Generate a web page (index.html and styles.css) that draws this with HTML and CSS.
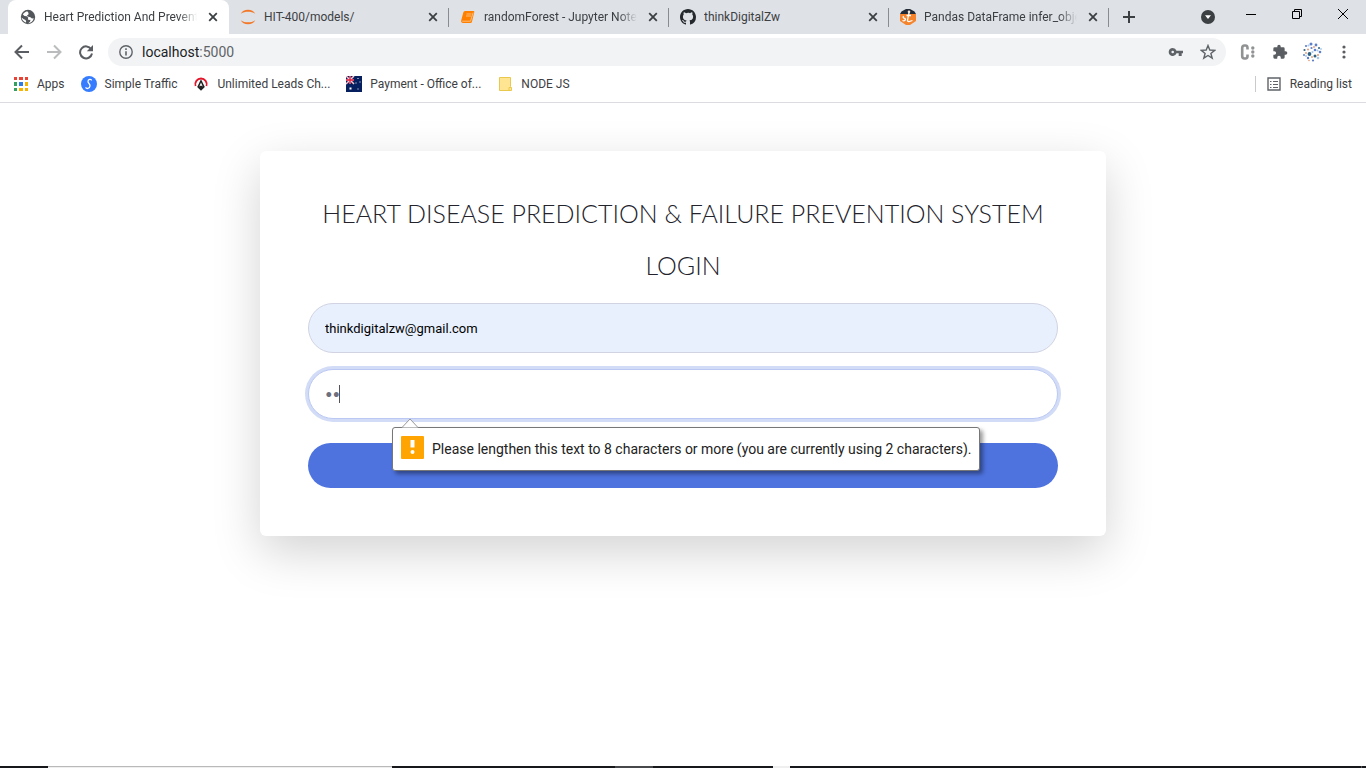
FILE: index.html
```html
<!DOCTYPE html>
<html lang="en">
<head>
<meta charset="utf-8">
<title>Heart Prediction And Prevention</title>
<link rel="stylesheet" href="styles.css">
</head>
<body>
<svg class="defs" aria-hidden="true">
  <symbol id="close" viewBox="0 0 16 16"><path d="M4.2 4.2l7.6 7.6M11.8 4.2l-7.6 7.6" fill="none" stroke="#3c4043" stroke-width="1.8"/></symbol>
</svg>
<header class="browser">
  <div class="tabstrip">
    <nav class="tabs" aria-label="Tabs">
      <div class="tab tab-active">
        <svg class="icon" viewBox="0 0 16 16"><circle cx="8" cy="8" r="7.2" fill="#53575b"/><path d="M7.2 2.2c-1.8.4-3.4 1.6-4.3 3.2l1.6 1.5 2.2.4 1.6 1.4-.5 1.5 1.2.7 1.5-.1-.5 1.9-2 1.7c3-.2 5.200-2.300 5.700-5.100l-1.700.1-1.600-1.200-2.900-.6-.5-1.200 1.600-1.100-.2-1.500z" fill="#fff"/><path d="M1.500 8.600l2.300 1.700 1.800.6.600 2.200-.8.300C3.500 12.600 2.100 11 1.500 8.600z" fill="#fff"/></svg>
        <a class="tab-title fade" href="#">Heart Prediction And Preventi</a>
        <button class="close" aria-label="Close tab"><svg class="icon"><use href="#close"/></svg></button>
      </div>
      <div class="tab">
        <svg class="icon" viewBox="0 0 16 16"><path d="M.8 4.800C2 2.200 4.800.8 8 .8s6 1.400 7.200 4C13 3.200 10.700 2.700 8 2.700s-5 .5-7.200 2.100zM.8 11.200c1.200 2.600 4 4 7.200 4s6-1.400 7.200-4c-2.200 1.600-4.500 2.100-7.200 2.100s-5-.5-7.200-2.100z" fill="#f37726"/></svg>
        <a class="tab-title" href="#">HIT-400/models/</a>
        <button class="close" aria-label="Close tab"><svg class="icon"><use href="#close"/></svg></button>
      </div>
      <div class="tab">
        <svg class="icon" viewBox="0 0 16 16"><path d="M5 2h8.500q1 0 .8 1L12 12.500q-.3 1.500-1.500 1.500H3q-2.200-.1-1.800-2.500L3.300 3.500Q3.700 2 5 2z" fill="#ff8000"/><path d="M6.500 5h5M6 7h5M2.300 12.200h8.200l2.600-8.500" fill="none" stroke="#ffd9ae" stroke-width=".7"/></svg>
        <a class="tab-title fade" href="#">randomForest - Jupyter Noteb</a>
        <button class="close" aria-label="Close tab"><svg class="icon"><use href="#close"/></svg></button>
      </div>
      <div class="tab">
        <svg class="icon" viewBox="0 0 16 16"><path fill="#24292e" d="M8 0C3.580 0 0 3.580 0 8c0 3.540 2.290 6.530 5.470 7.590.4.070.55-.17.55-.38 0-.19-.01-.82-.01-1.490-2.010.37-2.530-.49-2.690-.94-.09-.23-.48-.94-.82-1.130-.28-.15-.68-.52-.01-.53.63-.01 1.080.58 1.230.82.72 1.210 1.870.87 2.330.66.070-.52.28-.87.51-1.070-1.780-.2-3.640-.89-3.640-3.950 0-.87.31-1.590.82-2.150-.08-.2-.36-1.020.08-2.120 0 0 .67-.21 2.200.82A7.600 7.600 0 018 3.860c.68 0 1.360.09 2 .27 1.530-1.040 2.200-.82 2.200-.82.44 1.100.16 1.920.08 2.120.51.56.82 1.270.82 2.150 0 3.070-1.870 3.750-3.650 3.950.29.25.54.73.54 1.480 0 1.070-.01 1.930-.01 2.200 0 .21.15.46.55.38A8.010 8.010 0 0016 8c0-4.420-3.580-8-8-8z"/></svg>
        <a class="tab-title" href="#">thinkDigitalZw</a>
        <button class="close" aria-label="Close tab"><svg class="icon"><use href="#close"/></svg></button>
      </div>
      <div class="tab">
        <svg class="icon" viewBox="0 0 16 16"><path d="M0 5l1.500-2.500L6 0h4l4.500 2.500L16 5z" fill="#222b36"/><path d="M0 5h16v7l-6 4H6l-6-4z" fill="#f5842c"/><path d="M9.200 3L7.500 11.200q0 1.500 1.500 1.300l3.500-1M3.500 7q-1 2 1 2.300 1.500.5.500 2-1 1-2.500.2M6.500 6.500H11" fill="none" stroke="#fff" stroke-width="1.300"/><circle cx="9" cy="2.800" r="1.300" fill="#f3e7dc"/></svg>
        <a class="tab-title fade" href="#">Pandas DataFrame infer_objec</a>
        <button class="close" aria-label="Close tab"><svg class="icon"><use href="#close"/></svg></button>
      </div>
      <button class="newtab" aria-label="New tab"><svg viewBox="0 0 12 12" width="12" height="12"><path d="M6 0v12M0 6h12" stroke="#3c4043" stroke-width="2"/></svg></button>
    </nav>
    <div class="window-controls">
      <button aria-label="Search tabs"><svg viewBox="0 0 14 14" width="14" height="14"><circle cx="7" cy="7" r="7" fill="#3c4043"/><path d="M4 5.300h6L7 9z" fill="#fff"/></svg></button>
      <button class="win" aria-label="Minimize"><svg viewBox="0 0 10 10" width="10" height="10"><path d="M0 5.500h10" stroke="#000"/></svg></button>
      <button class="win" aria-label="Restore"><svg viewBox="0 0 10 10" width="10" height="10"><path d="M.5 2.500h7v7h-7zM2.500 2.500v-2h7v7h-2" fill="none" stroke="#000"/></svg></button>
      <button class="win" aria-label="Close"><svg viewBox="0 0 10 10" width="10" height="10"><path d="M0 0l10 10M10 0L0 10" stroke="#000"/></svg></button>
    </div>
  </div>
  <div class="toolbar">
    <button class="tool" aria-label="Back"><svg viewBox="0 0 16 16"><path d="M15 8H2M8 1.500L1.500 8 8 14.500" fill="none" stroke="#5a5e62" stroke-width="2"/></svg></button>
    <button class="tool" aria-label="Forward"><svg viewBox="0 0 16 16"><path d="M1 8h13M8 1.500L14.500 8 8 14.500" fill="none" stroke="#babcbe" stroke-width="2"/></svg></button>
    <button class="tool" aria-label="Reload"><svg viewBox="0 0 16 16"><path d="M13.200 5.200A6 6 0 1 0 14 9.500" fill="none" stroke="#5a5e62" stroke-width="2"/><path d="M15 1v6.200H8.800z" fill="#5a5e62"/></svg></button>
    <div class="omnibox">
      <svg class="info" viewBox="0 0 14 14"><circle cx="7" cy="7" r="6.200" fill="none" stroke="#5f6368" stroke-width="1.400"/><path d="M7 6.200v4.300M7 3.300v1.600" stroke="#5f6368" stroke-width="1.600"/></svg>
      <a class="url" href="#">localhost<span class="port">:5000</span></a>
      <button class="omni-button" aria-label="Saved passwords"><svg viewBox="0 0 16 16"><path d="M4.700 4a4 4 0 1 0 3.800 5.300h2.200V12h3V9.300H15V6.700H8.500A4 4 0 0 0 4.700 4zm0 2.700a1.300 1.300 0 1 1 0 2.600 1.300 1.300 0 0 1 0-2.600z" fill="#5f6368"/></svg></button>
      <button class="omni-button" aria-label="Bookmark this page"><svg viewBox="0 0 16 16"><path d="M8 1.500l1.800 4.500 4.900.3-3.800 3.100 1.300 4.800L8 11.500l-4.200 2.700 1.300-4.800-3.800-3.100 4.900-.3z" fill="none" stroke="#5f6368" stroke-width="1.400"/></svg></button>
    </div>
    <button class="tool" aria-label="Extension"><svg viewBox="0 0 16 16"><path d="M7.500 5.500V4Q7.500 1.500 5.500 1.500H4.500Q2.200 1.500 2.200 4v8q0 2.500 2.300 2.500h1q2 0 2-2.500v-1.500" fill="none" stroke="#909294" stroke-width="2.600"/><circle cx="12.800" cy="4" r="1.700" fill="#909294"/><circle cx="12.800" cy="8" r="1.700" fill="#909294"/><circle cx="12.800" cy="12" r="1.700" fill="#909294"/></svg></button>
    <button class="tool" aria-label="Extensions"><svg viewBox="0 0 24 24"><path d="M20.500 11H19V7a2 2 0 0 0-2-2h-4V3.500a2.500 2.500 0 0 0-5 0V5H4a2 2 0 0 0-2 2v3.800h1.500a2.700 2.700 0 0 1 0 5.400H2V20a2 2 0 0 0 2 2h3.800v-1.500a2.700 2.700 0 0 1 5.400 0V22H17a2 2 0 0 0 2-2v-4h1.500a2.500 2.500 0 0 0 0-5z" fill="#5a5e62"/></svg></button>
    <button class="tool" aria-label="Profile"><svg class="avatar" viewBox="0 0 20 20"><g fill="#5f80c8"><circle cx="9" cy="2" r="1.500"/><circle cx="4" cy="4" r="1.100"/><circle cx="14" cy="3" r="1.400"/><circle cx="9.500" cy="6" r="1.100"/><circle cx="18" cy="10" r="1.300"/><circle cx="13" cy="8" r="1.300"/><circle cx="2" cy="13" r="1"/><circle cx="6" cy="16" r="1.200"/><circle cx="11" cy="18.500" r="1.100"/></g><g fill="#2f6384"><circle cx="7.500" cy="12" r="1.900"/><circle cx="13" cy="14" r="1.500"/><circle cx="17" cy="6" r="1"/><circle cx="2.500" cy="8" r="1.100"/></g><g fill="#e39a75"><circle cx="6" cy="7.500" r="1"/><circle cx="12" cy="5" r=".9"/><circle cx="4" cy="11" r=".9"/><circle cx="10" cy="15" r=".9"/><circle cx="16" cy="13" r="1"/><circle cx="7" cy="18.500" r=".8"/></g><g fill="#aac8ed"><circle cx="6.500" cy="3.500" r="1.100"/><circle cx="16" cy="16" r="1.300"/><circle cx="10.500" cy="10" r="1.100"/><circle cx="15.500" cy="8.500" r="1"/><circle cx="4" cy="14" r="1"/><circle cx="19" cy="7" r=".9"/></g></svg></button>
    <button class="tool" aria-label="Menu"><svg viewBox="0 0 16 16"><circle cx="8" cy="3" r="1.600" fill="#5a5e62"/><circle cx="8" cy="8" r="1.600" fill="#5a5e62"/><circle cx="8" cy="13" r="1.600" fill="#5a5e62"/></svg></button>
  </div>
  <nav class="bookmarks" aria-label="Bookmarks">
    <a class="bookmark" href="#"><svg class="icon" viewBox="0 0 16 16"><path fill="#ea4335" d="M1 1h3v3H1zM6 1h4v3H6zM12 1h3v3h-3z"/><path fill="#34a060" d="M1 6h3v4H1zM1 12h3v3H1z"/><path fill="#2f7de1" d="M6 6h4v4H6z"/><path fill="#f4b400" d="M12 6h3v4h-3zM6 12h4v3H6zM12 12h3v3h-3z"/></svg>Apps</a>
    <a class="bookmark" href="#"><svg class="icon" viewBox="0 0 16 16"><circle cx="8" cy="8" r="8" fill="#367cff"/><path d="M10.500 4.500c-.2-2-3.700-1.200-3.500 1.200.1 1.500 2.300 2.200 2 4.300-.3 2.800-4 3.300-4.200 1.200" fill="none" stroke="#fff" stroke-width="1.300"/></svg>Simple Traffic</a>
    <a class="bookmark" href="#"><svg class="icon" viewBox="0 0 16 16"><path d="M2.600 10A5.700 5.700 0 1 1 13.400 10" fill="none" stroke="#e3172b" stroke-width="1.800"/><path d="M8 3.200L11.800 11 8 14.800 4.200 11z" fill="#222"/><path d="M8 6.500l1.700 4L8 9.500l-1.700 1z" fill="#fff"/></svg>Unlimited Leads Ch...</a>
    <a class="bookmark" href="#"><svg class="icon" viewBox="0 0 16 16"><path fill="#06205f" d="M0 0h16v16H0z"/><path d="M0 0l8 8M8 0L0 8M4 0v8M0 4h8" stroke="#f6c9d3" stroke-width="1.500"/><path d="M4 0v8M0 4h8" stroke="#e0233f" stroke-width="1.300"/><path d="M3.500 11.500h2v2h-2zM11.500 2h1v1h-1zM9.500 6.500h1v1h-1zM13.500 5.500h1v1h-1zM11.500 12.500h1v1h-1z" fill="#fff"/></svg>Payment - Office of...</a>
    <a class="bookmark" href="#"><svg class="icon" viewBox="0 0 16 16"><path d="M2.500 1.500h11v9l1 1v3h-12z" fill="#ffe591" stroke="#e8c84d"/><path d="M12 14.500v-3h2" fill="none" stroke="#e8c84d"/></svg>NODE JS</a>
    <a class="bookmark reading" href="#"><svg class="icon" viewBox="0 0 16 16"><path d="M2 2h12v12H2z" fill="none" stroke="#5f6368" stroke-width="1.400"/><path d="M4 5.500h1.500M4 8.500h1.500M4 11.500h1.500M7 5.500h5M7 8.500h5M7 11.500h5" stroke="#5f6368"/></svg>Reading list</a>
  </nav>
</header>
<main class="page">
  <section class="card">
    <h1 class="heading">HEART DISEASE PREDICTION &amp; FAILURE PREVENTION SYSTEM</h1>
    <h2 class="heading">LOGIN</h2>
    <form class="form">
      <input class="field field-filled" type="email" aria-label="Email" value="thinkdigitalzw@gmail.com">
      <div class="password">
        <input class="field field-focus" type="password" aria-label="Password" minlength="8" value="ab">
        <span class="caret"></span>
        <div class="bubble" role="alert">
          <svg class="bubble-arrow" viewBox="0 0 18 10"><path d="M1 9.500L9 1l8 8.500" fill="#fff" stroke="#999"/></svg>
          <svg class="warning" viewBox="0 0 23 23"><rect width="23" height="23" rx="1" fill="#ffa400"/><path d="M9.500 4h4v7.500h-4z" fill="#fff"/><circle cx="11.500" cy="16" r="2" fill="#fff"/></svg>
          <span>Please lengthen this text to 8 characters or more (you are currently using 2 characters).</span>
        </div>
      </div>
      <button class="submit" type="submit" aria-label="Login"></button>
    </form>
  </section>
</main>
<footer class="taskbar"><span class="task-search"></span><span class="task-apps"></span><span class="task-item"></span><span class="task-apps-end"></span><span class="task-gap"></span><span class="task-tray"></span></footer>
</body>
</html>
```
FILE: styles.css
```css
* { box-sizing: border-box; }
body {
  margin: 0;
  min-height: 100vh;
  display: flex;
  flex-direction: column;
  background: #fff;
  font-family: Roboto, "Noto Sans", sans-serif;
  font-size: 12px;
  color: #3c4043;
}
.defs { display: none; }
svg { display: block; flex: none; }
a { color: inherit; text-decoration: none; }
button { border: 0; padding: 0; background: none; font: inherit; display: flex; align-items: center; justify-content: center; }
.icon { width: 16px; height: 16px; }

.browser { border-bottom: 1px solid #dadce0; }
.tabstrip { display: flex; height: 34px; background: #dee1e6; }
.tabs { display: flex; flex: 1; min-width: 0; padding-left: 8px; }
.tab { display: flex; align-items: center; gap: 8px; flex: 0 1 220px; min-width: 0; padding: 0 8px 0 11px; background: linear-gradient(#888c91, #888c91) right 8px / 1px 19px no-repeat; }
.tab-active { flex-basis: 221px; background: #fff; border-radius: 8px 8px 0 0; padding-left: 12px; }
.tab-title { flex: 1; min-width: 0; overflow: hidden; white-space: nowrap; line-height: 18px; }
.fade { -webkit-mask-image: linear-gradient(90deg, #000 88%, transparent); mask-image: linear-gradient(90deg, #000 88%, transparent); }
.close { width: 16px; height: 16px; }
.newtab { width: 28px; margin-left: 6px; }
.window-controls { display: flex; align-items: center; }
.window-controls button { width: 40px; height: 34px; }
.window-controls .win { width: 46px; height: 28px; align-self: flex-start; }

.toolbar { display: flex; align-items: center; height: 36px; padding: 0 6px; }
.tool { width: 32px; height: 28px; }
.tool svg { width: 16px; height: 16px; }
.tool .avatar { width: 20px; height: 20px; }
.omnibox { flex: 1; display: flex; align-items: center; height: 28px; margin: 0 6px; padding: 0 2px 0 11px; border-radius: 14px; background: #f1f3f4; }
.info { width: 14px; height: 14px; }
.url { flex: 1; margin-left: 9px; font-size: 14px; color: #202124; }
.port { color: #5f6368; }
.omni-button { width: 32px; height: 28px; }
.omni-button svg { width: 16px; height: 16px; }

.bookmarks { display: flex; align-items: center; gap: 16px; height: 32px; padding: 0 14px 4px 13px; }
.bookmark { display: flex; align-items: center; gap: 8px; line-height: 16px; white-space: nowrap; }
.reading { margin-left: auto; padding-left: 10px; border-left: 1px solid #c8cacd; }

.page { flex: 1; padding: 48px 16px; }
.card { max-width: 846px; margin: 0 auto; padding: 48px; border-radius: 6px; background: #fff; box-shadow: 0 16px 48px rgba(0, 0, 0, .175); }
.heading { margin: 0 0 24px; font-family: Lato, sans-serif; font-size: 25px; font-weight: 300; line-height: 28px; text-align: center; color: #22232b; }
.form { display: flex; flex-direction: column; }
.field { display: block; width: 100%; height: 50px; padding: 0 16px; border: 1px solid #d1d3e2; border-radius: 25px; outline: 0; background: #fff; color: #6e707e; font-family: Roboto, sans-serif; font-size: 13px; }
.field-filled { background: #e8f0fe; color: #000; }
.field-focus { border-color: #bac8f3; box-shadow: 0 0 0 3px #d2dcf7; font-family: Lato, sans-serif; }
.password { position: relative; margin: 16px 0 24px; }
.caret { position: absolute; left: 31px; top: 16px; width: 1px; height: 18px; background: #52535e; }
.bubble { position: absolute; left: 84px; top: 58px; z-index: 1; display: flex; align-items: center; gap: 8px; height: 44px; padding: 0 8px; border: 1px solid #777; border-radius: 3px; background: #fff; box-shadow: 3px 3px 4px rgba(0, 0, 0, .4); font-size: 14px; line-height: 20px; color: #222; white-space: nowrap; }
.bubble-arrow { position: absolute; left: 8px; top: -10px; width: 18px; height: 10px; }
.warning { width: 23px; height: 23px; margin-bottom: 4px; }
.submit { width: 100%; height: 45px; border-radius: 23px; background: #4e73df; }

.taskbar { display: flex; height: 2px; background: #17181c; }
.task-search { width: 344px; margin-left: 48px; background: #efefef; border-top: 1px solid #b9b9b9; }
.task-apps { width: 223px; }
.task-item { width: 38px; background: #47484b; }
.task-apps-end { width: 120px; }
.task-gap { width: 17px; background: #efefef; }
.task-tray { flex: 1; border-right: 1px solid #55565a; margin-right: 4px; }
```
